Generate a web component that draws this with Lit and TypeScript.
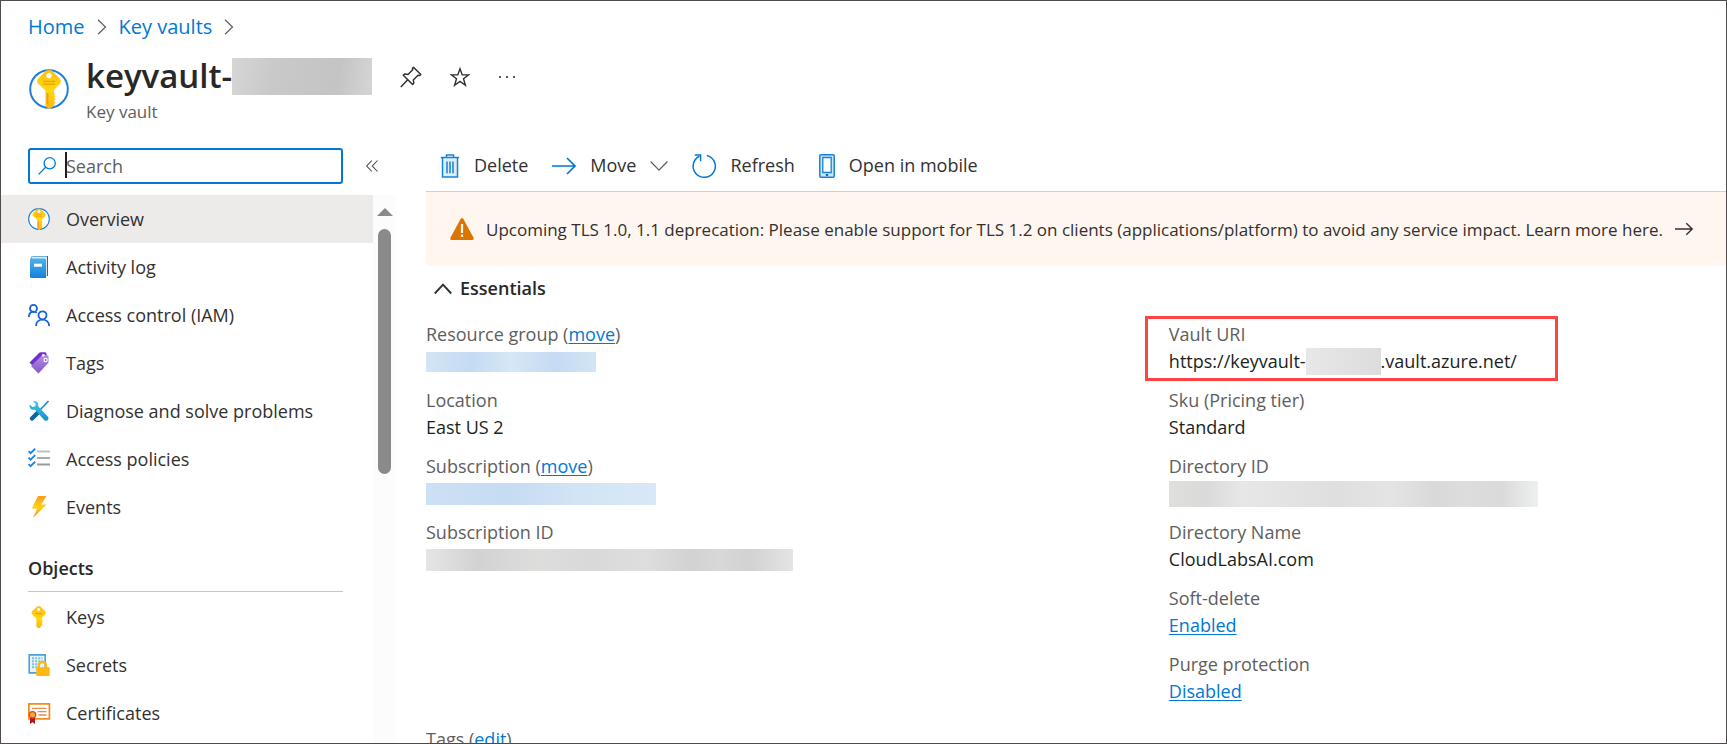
import { LitElement, html, css, svg, nothing } from "lit";
import type { TemplateResult } from "lit";
import { customElement, property } from "lit/decorators.js";
import { classMap } from "lit/directives/class-map.js";

/* ---------- icon artwork ---------- */

const icons: Record<string, { box: string; art: unknown }> = {
  vault: {
    box: "0 0 40 40",
    art: svg`
      <defs>
        <linearGradient id="kg" x1="0" y1="0" x2="0" y2="1">
          <stop offset="0" stop-color="#fdbd14" /><stop offset=".5" stop-color="#ffd70f" /><stop offset="1" stop-color="#fdb813" />
        </linearGradient>
      </defs>
      <circle cx="20" cy="20" r="18.8" fill="#fff" stroke="#1a80dc" stroke-width="2" />
      <path fill="url(#kg)" d="M16.300 2.200q3.700-2.600 7.400 0l7.500 7.800q1.800 2.200 0 4.400l-6.200 6.800v2.200l1.300 1-1.300 1.500 1.500 1.500-1.500 1.300 1.500 1.600-1.500 1.400 1.500 1.700-1.500 1.500v1.500l-3.600 3.200q-1 .8-2 0l-2.900-2.700V21.400L8.800 14.400q-1.800-2.200 0-4.400z" />
      <circle cx="20" cy="6.600" r="2.700" fill="#fff" />
      <path stroke="#f59b10" stroke-width="1.300" d="M14 12.300h12M14 15.100h12" />
      <path stroke="#f79a1c" stroke-width="1.800" d="M18.500 24v11.500" />`,
  },
  book: {
    box: "0 0 22 22",
    art: svg`
      <defs><linearGradient id="bg" x1="0" y1="0" x2="0" y2="1"><stop offset="0" stop-color="#50b0ea" /><stop offset="1" stop-color="#1480d8" /></linearGradient></defs>
      <path fill="#0f6fc4" d="M3 2.500Q3 0 5 0h15v20H4z" />
      <path fill="#d8e8f4" d="M4 .6h15V20l-2-1V3H3.500z" />
      <path fill="url(#bg)" d="M2 2.500h14.500Q18 2.500 18 4v18H3.500Q2 22 2 20.500z" />
      <path fill="#fff" d="M6 7.700h8v3H6z" />`,
  },
  people: {
    box: "0 0 22 22",
    art: svg`<g fill="none" stroke="#1463d8" stroke-width="1.800">
      <circle cx="5.500" cy="4.400" r="3.500" /><path d="M.9 13c0-6.500 6-6 7.800-4.200" />
      <circle cx="14.500" cy="11.300" r="4" /><path d="M8 22c.3-8.500 12.700-8.500 13.200 0" /></g>`,
  },
  tag: {
    box: "0 0 22 22",
    art: svg`
      <defs><linearGradient id="tg" x1="0" y1="0" x2="0" y2="1"><stop offset="0" stop-color="#b58be6" /><stop offset="1" stop-color="#8555c5" /></linearGradient></defs>
      <path fill="#6f31c9" d="M1.500 10.500 11 1q.7-.7 2-.7h4q1.500 0 1.500 1.500V6L6.500 15.500z" />
      <path fill="url(#tg)" d="M3 14 13.500 4q.7-.7 1.800-.7H19q1.500 0 1.500 1.500v5q0 1-.7 1.700L10.500 21.500z" />
      <circle cx="15.300" cy="3.300" r="1.400" fill="#fff" /><circle cx="17.600" cy="8" r="1.600" fill="#8a55d0" stroke="#fff" stroke-width="1.200" />`,
  },
  tools: {
    box: "0 0 22 22",
    art: svg`
      <defs><linearGradient id="wg" x1="0" y1="0" x2="0" y2="1"><stop offset="0" stop-color="#38cdee" /><stop offset="1" stop-color="#1791c8" /></linearGradient></defs>
      <path stroke="#1b8fcf" stroke-width="1.800" d="M20.500 1 12 10" />
      <path stroke="#1065a8" stroke-width="4.500" stroke-linecap="round" d="m10 12.500-6 6" />
      <path fill="url(#wg)" d="M5 1.200c3-1 6 1.500 5.200 5l10 10.800c1.200 2.500-1.600 4.800-3.600 3.400L7 9.700C3.500 10.500.8 8 1.700 4.400L4.600 7l2.600-.7.500-2.600z" />`,
  },
  checklist: {
    box: "0 0 22 22",
    art: svg`
      <path stroke="#c0c0c0" stroke-width="2" d="M9 3.500h13" /><path stroke="#aaa" stroke-width="2" d="M9 10h13" /><path stroke="#999" stroke-width="2" d="M9 16.500h13" />
      <path fill="none" stroke="#1b84e0" stroke-width="1.900" d="m.6 3.200 2 2L7.200.6M.6 9.700l2 2 4.600-4.600M.6 16.200l2 2 4.600-4.600" />`,
  },
  bolt: {
    box: "0 0 22 22",
    art: svg`
      <defs><linearGradient id="eg" x1="0" y1="0" x2="0" y2="1"><stop offset="0" stop-color="#f99b1c" /><stop offset=".5" stop-color="#ffd20f" /><stop offset="1" stop-color="#f78d1e" /></linearGradient></defs>
      <path fill="url(#eg)" d="M10 0h8.500L13 8.500h5.500L5 22l4.200-9.500H3.800z" />`,
  },
  key: {
    box: "0 0 22 22",
    art: svg`
      <defs><linearGradient id="yg" x1="0" y1="0" x2="0" y2="1"><stop offset="0" stop-color="#fdbd14" /><stop offset=".6" stop-color="#ffd70f" /><stop offset="1" stop-color="#fdaf13" /></linearGradient></defs>
      <path fill="url(#yg)" d="M8.800.7q2-1.400 3.800 0l4.700 4.600q1 1.500 0 3l-3.600 4v1.200l1 .9-1 1 1 1.100-1 1.200.8 1-1 1-1.600 2q-1.200.8-2.300 0l-1.300-1.500v-8L4 8.300q-1-1.500 0-3z" />
      <circle cx="10.700" cy="3.500" r="1.500" fill="#fff" /><path stroke="#f5a010" stroke-width="1.300" d="M7 7.600h7.500" />`,
  },
  secret: {
    box: "0 0 22 22",
    art: svg`
      <path fill="#e6f5fc" stroke="#4ba3cf" stroke-width="1.600" d="M1.200.9h16v18h-16z" />
      <path stroke="#7cc0e0" stroke-width="2" stroke-dasharray="2 1.200" d="M4 4.200h10.500M4 7.200h10.500M4 10.200h6M4 13.200h5" />
      <path fill="none" stroke="#fdb813" stroke-width="2.400" d="M10.800 14v-2.500q0-3.500 3.600-3.500t3.600 3.500V14" />
      <rect x="8.200" y="13.200" width="13.500" height="8.800" rx="1" fill="#fdb813" />`,
  },
  certificate: {
    box: "0 0 22 22",
    art: svg`
      <path fill="#fff" stroke="#f28a1c" stroke-width="1.700" d="M.9 1.900h20.500v15H.9z" />
      <path stroke="#e98b4a" stroke-width="1.300" d="M4 6.300h14.500M9.500 9.700h9M10.500 13h8" />
      <path fill="#b5161c" d="M2 14.500h5V22l-2.500-1.800L2 22z" />
      <circle cx="4.500" cy="12.800" r="3.200" fill="#f9a13c" stroke="#dd4a20" stroke-width="1.300" />`,
  },
  search: {
    box: "0 0 18 18",
    art: svg`<g fill="none" stroke="#0078d4" stroke-width="1.300"><circle cx="11.700" cy="6.300" r="5.600" /><path d="M7.700 10.300.6 17.400" /></g>`,
  },
  pin: {
    box: "0 0 22 22",
    art: svg`<path fill="none" stroke="#323130" stroke-width="1.500" stroke-linejoin="round" d="M13.500 1.200 20.800 8.500l-1 1-1.800-.2-4.700 4.700.5 3-1.200 1.500-9.300-9.300L4.800 8l3.200.5 4.700-4.700-.2-1.600zM8 13.500 .8 21" />`,
  },
  star: {
    box: "0 0 20 20",
    art: svg`<path fill="none" stroke="#323130" stroke-width="1.400" d="M10 1.800 12.200 7.700 18.600 7.900 13.500 11.800 15.400 18.200 10 14.400 4.600 18.200 6.500 11.800 1.400 7.900 7.800 7.700z" />`,
  },
  dots: {
    box: "0 0 18 4",
    art: svg`<g fill="#323130"><circle cx="2" cy="2" r="1.100" /><circle cx="9" cy="2" r="1.100" /><circle cx="16" cy="2" r="1.100" /></g>`,
  },
  collapse: {
    box: "0 0 12 12",
    art: svg`<path fill="none" stroke="#484644" stroke-width="1.100" d="M5.800.5.700 6l5.100 5.500M11.500.5 6.400 6l5.100 5.500" />`,
  },
  crumb: {
    box: "0 0 10 16",
    art: svg`<path fill="none" stroke="#605e5c" stroke-width="1.200" d="m1 .8 7.500 7.200L1 15.200" />`,
  },
  trash: {
    box: "0 0 20 24",
    art: svg`<path fill="#deeffc" d="M3 4h14v19H3z" /><g fill="none" stroke="#1682d9" stroke-width="1.500"><path d="M.8 3.600h18.400M6.500 3.600V1h7v2.600M2.500 3.600v19.500h15V3.600" /><path d="M7 7.500v11.700M10 7.500v11.700M13 7.500v11.700" /></g>`,
  },
  arrow: {
    box: "0 0 24 24",
    art: svg`<path fill="none" stroke="#0078d4" stroke-width="1.700" d="M0 12h23M15 4l8 8-8 8" />`,
  },
  down: {
    box: "0 0 18 12",
    art: svg`<path fill="none" stroke="#605e5c" stroke-width="1.200" d="m.6 1.500 8.400 8.700 8.400-8.700" />`,
  },
  refresh: {
    box: "0 0 24 24",
    art: svg`<g fill="none" stroke="#0078d4" stroke-width="1.500"><path d="M14.800 1.400A11.100 11.100 0 1 1 7.400 2.200" /><path d="M2.800 1h5.800v6.200" /></g>`,
  },
  mobile: {
    box: "0 0 16 24",
    art: svg`<rect x=".8" y=".8" width="14.400" height="22.400" rx="1" fill="#cfe6f8" stroke="#1682d9" stroke-width="1.500" /><path fill="#fff" stroke="#1682d9" stroke-width="1.300" d="M3.800 3.500h8.400v15H3.800z" /><path fill="#0078d4" d="M6.800 20h2.400v2H6.800z" />`,
  },
  warning: {
    box: "0 0 24 22",
    art: svg`<path fill="#db7500" d="M10.700.8q1.300-1.600 2.600 0L23.700 20q.6 1.700-1 2H1.300q-1.600-.3-1-2z" /><path fill="#fff6f0" d="M10.900 6h2.200v9h-2.200zM10.900 16.500h2.200V19h-2.200z" />`,
  },
  go: {
    box: "0 0 18 14",
    art: svg`<path fill="none" stroke="#323130" stroke-width="1.400" d="M0 7h17M11.300 1.200 17.200 7l-5.900 5.800" />`,
  },
  up: {
    box: "0 0 18 12",
    art: svg`<path fill="none" stroke="#323130" stroke-width="1.900" d="m.8 10.500 8.200-8.800 8.200 8.800" />`,
  },
};

@customElement("line-icon")
class LineIcon extends LitElement {
  @property() name = "";
  static styles = css`
    :host { display: block; flex: none; }
    svg { display: block; width: 100%; height: 100%; overflow: visible; }
  `;
  render() {
    const icon = icons[this.name];
    return icon ? html`<svg viewBox=${icon.box} aria-hidden="true">${icon.art}</svg>` : nothing;
  }
}

/* ---------- page data ---------- */

type MenuItem = { icon: string; label: string; selected?: boolean };

const generalItems: MenuItem[] = [
  { icon: "vault", label: "Overview", selected: true },
  { icon: "book", label: "Activity log" },
  { icon: "people", label: "Access control (IAM)" },
  { icon: "tag", label: "Tags" },
  { icon: "tools", label: "Diagnose and solve problems" },
  { icon: "checklist", label: "Access policies" },
  { icon: "bolt", label: "Events" },
];

const objectItems: MenuItem[] = [
  { icon: "key", label: "Keys" },
  { icon: "secret", label: "Secrets" },
  { icon: "certificate", label: "Certificates" },
];

type Field = { label: string; action?: string; value: TemplateResult | string; marked?: boolean };

const leftFields: Field[] = [
  { label: "Resource group", action: "move", value: html`<span class="mask mask-group"></span>` },
  { label: "Location", value: "East US 2" },
  { label: "Subscription", action: "move", value: html`<span class="mask mask-sub"></span>` },
  { label: "Subscription ID", value: html`<span class="mask mask-subid"></span>` },
];

const rightFields: Field[] = [
  {
    label: "Vault URI",
    value: html`https://keyvault-<span class="mask mask-uri"></span>.vault.azure.net/`,
    marked: true,
  },
  { label: "Sku (Pricing tier)", value: "Standard" },
  { label: "Directory ID", value: html`<span class="mask mask-dir"></span>` },
  { label: "Directory Name", value: "CloudLabsAI.com" },
  { label: "Soft-delete", value: html`<a href="#">Enabled</a>` },
  { label: "Purge protection", value: html`<a href="#">Disabled</a>` },
];

@customElement("app-root")
class AppRoot extends LitElement {
  static styles = css`
    :host {
      display: block;
      font-family: "Open Sans", "Noto Sans", sans-serif;
      font-size: 18px;
      line-height: 27px;
      color: #323130;
    }
    * { box-sizing: border-box; }
    a { color: #0078d4; text-decoration: underline; text-underline-offset: 2px; text-decoration-thickness: 1px; }
    button { font: inherit; color: inherit; background: none; border: 0; padding: 0; margin: 0; display: flex; align-items: center; }
    .page {
      height: 100vh;
      display: flex;
      flex-direction: column;
      overflow: hidden;
      border: 1px solid #504a4c;
      background: #fff;
    }

    .crumbs { display: flex; align-items: center; padding: 12px 27px 0; gap: 12px; font-size: 20px; }
    .crumbs a { text-decoration: none; }
    .crumbs line-icon { width: 10px; height: 16px; }

    .head { display: flex; align-items: flex-start; padding: 12px 28px 0; }
    .head-icon { width: 40px; height: 40px; margin: 17px 17px 0 0; }
    h1 { display: flex; align-items: center; margin: 0; font-size: 33px; line-height: 48px; font-weight: 600; color: #292827; }
    .sub { font-size: 17px; line-height: 24px; color: #605e5c; }
    .tools { display: flex; align-items: center; gap: 28px; height: 50px; margin-left: 28px; }
    .tool-pin { width: 22px; height: 22px; }
    .tool-star { width: 20px; height: 20px; }
    .tool-dots { width: 18px; height: 4px; }

    .body { display: flex; flex: 1; min-height: 0; padding-top: 24px; }
    .side { width: 395px; flex: none; display: flex; flex-direction: column; min-height: 0; }
    .finder { display: flex; align-items: center; gap: 23px; padding: 0 18px 0 27px; }
    .box {
      position: relative;
      flex: 1;
      display: flex;
      align-items: center;
      gap: 10px;
      height: 36px;
      padding-left: 8px;
      border: 2px solid #0078d4;
      border-radius: 3px;
      background: #fff;
    }
    .box line-icon { width: 18px; height: 18px; }
    .box input { flex: 1; min-width: 0; border: 0; outline: 0; padding: 0; font: inherit; color: #323130; background: none; }
    .box input::placeholder { color: #605e5c; opacity: 1; }
    .caret { position: absolute; left: 35px; top: 2px; width: 2px; height: 26px; background: #201f1e; }
    .fold { width: 12px; height: 12px; }

    .menu-wrap { display: flex; flex: 1; min-height: 0; margin-top: 11px; }
    .menu { flex: 1; overflow: hidden; }
    .menu ul { list-style: none; margin: 0; padding: 0; }
    .item { display: flex; align-items: center; gap: 16px; height: 48px; padding-left: 27px; color: #323130; text-decoration: none; }
    .item.selected { background: #edebe9; }
    .item line-icon { width: 22px; height: 22px; }
    h2 { margin: 0; font-size: 18px; line-height: 27px; font-weight: 600; color: #292827; }
    .menu h2 { margin: 0 30px 1px 27px; padding: 24px 0 9px; border-bottom: 1px solid #c8c6c4; }
    .track { width: 23px; background: #fcfcfc; display: flex; flex-direction: column; align-items: center; padding: 13px 0; gap: 13px; }
    .track-up { width: 0; height: 0; border: 8px solid transparent; border-top: 0; border-bottom-color: #8a8a8a; }
    .thumb { width: 13px; height: 47%; border-radius: 7px; background: #8a8a8a; }

    main { flex: 1; min-width: 0; margin-left: 30px; overflow: hidden; }
    .commands { display: flex; align-items: center; height: 44px; padding: 0 14px 8px; border-bottom: 1px solid #d2d0ce; gap: 24px; }
    .commands button { gap: 14px; }
    .cmd-trash { width: 20px; height: 24px; }
    .cmd-arrow, .cmd-refresh { width: 24px; height: 24px; }
    .cmd-down { width: 18px; height: 12px; }
    .cmd-mobile { width: 16px; height: 24px; }
    .banner { display: flex; align-items: center; gap: 12px; height: 74px; padding: 0 24px; background: #fff6f0; border-radius: 0 0 0 3px; font-size: 17px; white-space: nowrap; }
    .warn { width: 24px; height: 22px; }
    .banner a { display: flex; align-items: center; gap: 12px; color: inherit; text-decoration: none; }
    .go { width: 18px; height: 14px; }

    .essentials { padding: 9px 0 0 8px; }
    .essentials button { gap: 8px; }
    .essentials line-icon { width: 18px; height: 12px; }
    .columns { display: grid; grid-template-columns: 4fr 3fr; padding-top: 19px; }
    dl { margin: 0; display: grid; gap: 12px; align-content: start; }
    .field { position: relative; }
    dt { color: #605e5c; }
    dd { margin: 0; height: 27px; color: #201f1e; white-space: nowrap; display: flex; align-items: center; }
    .marked::after { content: ""; position: absolute; inset: -5px 168px -6px -24px; border: 3px solid #ff4343; }
    .tags { padding-top: 21px; color: #605e5c; }

    .mask { display: block; flex: none; }
    .mask-title { width: 140px; height: 37px; background: linear-gradient(100deg, #d6d6d6, #c9c9c9 30%, #c4c4c4 75%, #d6d6d6); }
    .mask-group { width: 170px; height: 20px; background: linear-gradient(90deg, #d3e5f6, #c4dbf3 27%, #d6e7f6 50%, #c4dbf3 77%, #d3e5f6); }
    .mask-sub { width: 230px; height: 22px; background: linear-gradient(90deg, #cde1f5, #c6dcf3 35%, #d2e4f5 65%, #d8e8f6); }
    .mask-subid { width: 367px; height: 22px; background: linear-gradient(90deg, #e6e6e6, #d2d2d2 14%, #dddddc 30%, #d9d9d9 45%, #dedede 60%, #d2d2d2 72%, #d8d8d8 80%, #d2d2d2 88%, #e4e4e4); }
    .mask-uri { width: 75px; height: 27px; background: linear-gradient(100deg, #e8e8e8, #dcdcdc); }
    .mask-dir { width: 369px; height: 26px; background: linear-gradient(90deg, #dfdfdd, #dadada 10%, #e6e7e6 20%, #dfdfdf 45%, #e4e4e4 60%, #d9d9d9 72%, #dddddd 80%, #dadada 90%, #eef0ef); }
  `;

  private item(i: MenuItem) {
    return html`<li>
      <a href="#" class=${classMap({ item: true, selected: !!i.selected })}><line-icon name=${i.icon}></line-icon>${i.label}</a>
    </li>`;
  }

  private field(f: Field) {
    return html`<div class=${classMap({ field: true, marked: !!f.marked })}>
      <dt>${f.label}${f.action ? html` (<a href="#">${f.action}</a>)` : nothing}</dt>
      <dd>${f.value}</dd>
    </div>`;
  }

  render() {
    return html`<div class="page">
      <nav class="crumbs" aria-label="Breadcrumb">
        <a href="#">Home</a><line-icon name="crumb"></line-icon>
        <a href="#">Key vaults</a><line-icon name="crumb"></line-icon>
      </nav>
      <header class="head">
        <line-icon class="head-icon" name="vault"></line-icon>
        <div>
          <h1>keyvault-<span class="mask mask-title"></span></h1>
          <div class="sub">Key vault</div>
        </div>
        <div class="tools">
          <button aria-label="Pin"><line-icon class="tool-pin" name="pin"></line-icon></button>
          <button aria-label="Favorite"><line-icon class="tool-star" name="star"></line-icon></button>
          <button aria-label="More"><line-icon class="tool-dots" name="dots"></line-icon></button>
        </div>
      </header>
      <div class="body">
        <aside class="side">
          <div class="finder">
            <label class="box">
              <line-icon name="search"></line-icon>
              <input type="text" placeholder="Search" aria-label="Search" />
              <span class="caret"></span>
            </label>
            <button aria-label="Collapse menu"><line-icon class="fold" name="collapse"></line-icon></button>
          </div>
          <div class="menu-wrap">
            <nav class="menu" aria-label="Resource menu">
              <ul>${generalItems.map((i) => this.item(i))}</ul>
              <h2>Objects</h2>
              <ul>${objectItems.map((i) => this.item(i))}</ul>
            </nav>
            <div class="track"><span class="track-up"></span><span class="thumb"></span></div>
          </div>
        </aside>
        <main>
          <div class="commands">
            <button><line-icon class="cmd-trash" name="trash"></line-icon>Delete</button>
            <button><line-icon class="cmd-arrow" name="arrow"></line-icon>Move<line-icon class="cmd-down" name="down"></line-icon></button>
            <button><line-icon class="cmd-refresh" name="refresh"></line-icon>Refresh</button>
            <button><line-icon class="cmd-mobile" name="mobile"></line-icon>Open in mobile</button>
          </div>
          <div class="banner">
            <line-icon class="warn" name="warning"></line-icon>
            <a href="#">Upcoming TLS 1.0, 1.1 deprecation: Please enable support for TLS 1.2 on clients (applications/platform) to avoid any service impact. Learn more here.<line-icon class="go" name="go"></line-icon></a>
          </div>
          <div class="essentials">
            <h2><button aria-expanded="true"><line-icon name="up"></line-icon>Essentials</button></h2>
          </div>
          <div class="columns">
            <dl>${leftFields.map((f) => this.field(f))}</dl>
            <dl>${rightFields.map((f) => this.field(f))}</dl>
          </div>
          <div class="tags">Tags (<a href="#">edit</a>)</div>
        </main>
      </div>
    </div>`;
  }
}
